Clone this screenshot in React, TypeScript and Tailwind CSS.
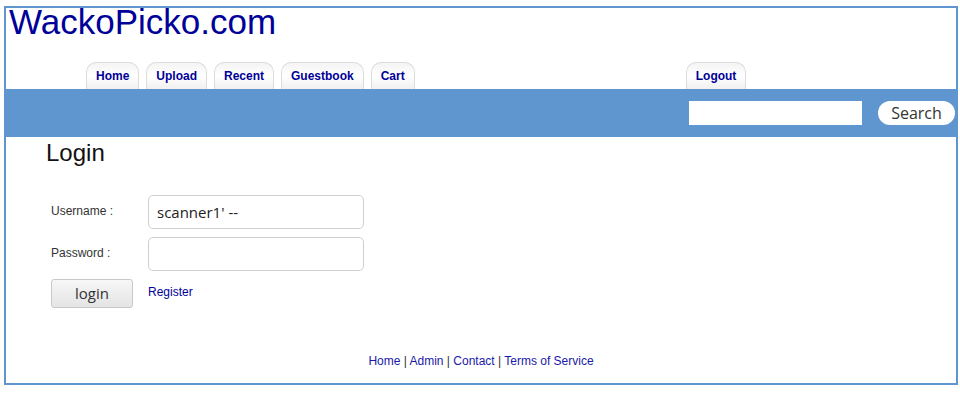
import React from "react";

const tabs = ["Home", "Upload", "Recent", "Guestbook", "Cart"];

function Tab({ label }: { label: string }) {
  return (
    <a className="flex h-[27px] items-center rounded-t-[10px] border border-b-0 border-[#dcdcdc] bg-gradient-to-b from-[#f4f4f4] via-white to-[#f0f0f0] px-[9px] text-[12px] font-bold text-[#000099]">
      {label}
    </a>
  );
}

export default function App() {
  return (
    <div className="bg-white pl-[4px] pt-[6px] font-['Liberation_Sans',Arial,sans-serif]">
      <div className="flex h-[379px] w-[954px] flex-col border-2 border-[#5f96d0]">
        {/* header */}
        <div className="flex h-[81px] flex-col">
          <h1 className="pl-[3px] pt-[1px] text-[35px] leading-[26px] text-[#000099]">WackoPicko.com</h1>
          <div className="mt-auto flex gap-[7px] pl-[80px]">
            {tabs.map((t) => (
              <Tab key={t} label={t} />
            ))}
            <div className="ml-[264px]">
              <Tab label="Logout" />
            </div>
          </div>
        </div>

        {/* search bar */}
        <div className="flex h-[48px] items-center justify-end bg-[#5f96d0]">
          <input className="h-[24px] w-[173px] bg-white outline-none" />
          <button className="ml-[16px] mr-[1px] h-[24px] w-[77px] rounded-full bg-white font-['Open_Sans',sans-serif] text-[16px] text-[#333]">
            Search
          </button>
        </div>

        {/* content */}
        <div className="flex flex-1 flex-col">
          <h2 className="pl-[40px] pt-[2px] text-[24px] leading-[28px] text-[#111]">Login</h2>
          <div className="mt-[28px] grid grid-cols-[97px_216px] items-center gap-y-[8px] pl-[45px] text-[12px] text-[#333]">
            <span className="-mt-[3px]">Username :</span>
            <input
              defaultValue="scanner1' --"
              className="h-[34px] rounded-[5px] border border-[#cfcfcf] px-[8px] font-['Open_Sans',sans-serif] text-[15px] text-[#222] outline-none"
            />
            <span className="-mt-[3px]">Password :</span>
            <input
              type="password"
              className="h-[34px] rounded-[5px] border border-[#cfcfcf] px-[8px] outline-none"
            />
            <button className="h-[29px] w-[82px] rounded-[3px] border border-[#c8c8c8] bg-gradient-to-b from-[#f7f7f7] to-[#e4e4e4] font-['Open_Sans',sans-serif] text-[15px] text-[#333]">
              login
            </button>
            <a className="-mt-[3px] text-[#000099]">Register</a>
          </div>

          <div className="mt-auto mb-[15px] text-center text-[12px] leading-[14px] text-[#333]">
            <a className="text-[#1a1aa8]">Home</a> | <a className="text-[#1a1aa8]">Admin</a> |{" "}
            <a className="text-[#1a1aa8]">Contact</a> | <a className="text-[#1a1aa8]">Terms of Service</a>
          </div>
        </div>
      </div>
    </div>
  );
}
